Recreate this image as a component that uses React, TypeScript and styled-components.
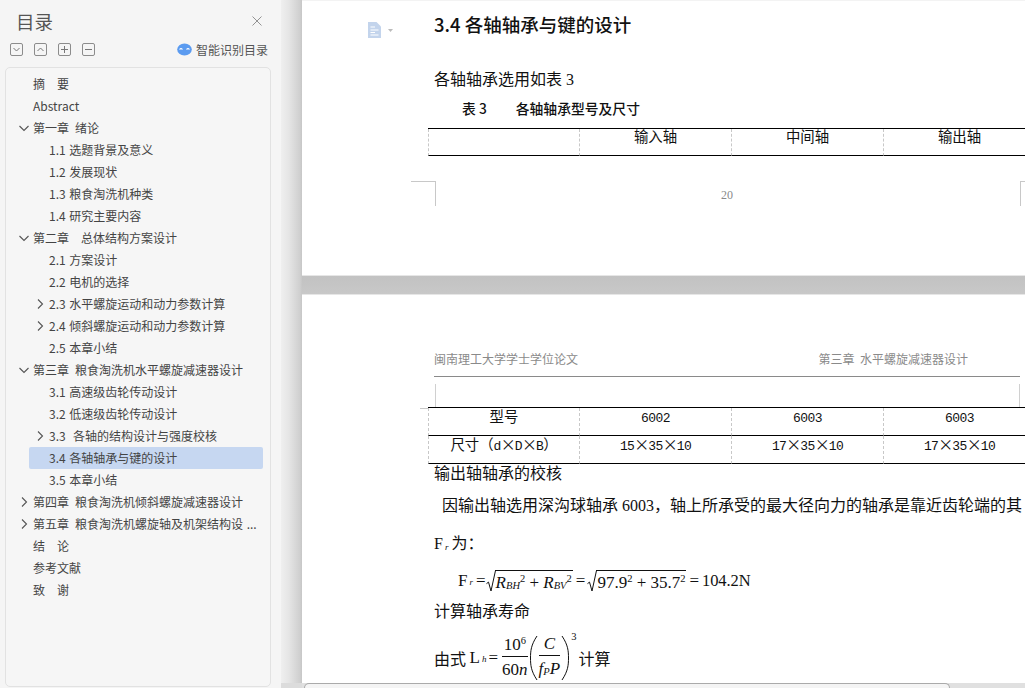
import React from "react";
import styled, { createGlobalStyle } from "styled-components";

const Global = createGlobalStyle`
  html, body { margin: 0; padding: 0; height: 100%; overflow: hidden; background: #fff; }
  #root { height: 688px; }
`;

const CJK = `"Noto Sans CJK SC", "Noto Sans", sans-serif`;
const SERIF = `"Liberation Serif", "Noto Sans CJK SC", serif`;

const Shell = styled.div`
  display: flex;
  width: 1025px;
  height: 688px;
  overflow: hidden;
  font-family: ${CJK};
`;

const Sidebar = styled.aside`
  flex: 0 0 281px;
  display: flex;
  flex-direction: column;
  background: #f5f5f5;
  padding: 0 10px 1px 5px;
  box-sizing: border-box;
`;

const TitleRow = styled.div`
  height: 40px;
  display: flex;
  align-items: center;
  justify-content: space-between;
  padding: 2px 9px 0 11px;
  box-sizing: border-box;
`;

const Title = styled.h1`
  margin: 0;
  font-size: 18.5px;
  font-weight: 400;
  color: #555;
`;

const CloseButton = styled.button`
  width: 10px;
  height: 10px;
  padding: 0;
  border: 0;
  background: none;
  display: flex;
`;

const ToolRow = styled.div`
  height: 27px;
  display: flex;
  align-items: center;
  padding: 0 3px 9px 5px;
  box-sizing: border-box;
  gap: 11px;
`;

const SquareButton = styled.button`
  width: 13px;
  height: 13px;
  padding: 0;
  border: 1px solid #8c8c8c;
  border-radius: 2px;
  background: #f5f5f5;
  box-sizing: border-box;
  display: flex;
`;

const Smart = styled.div`
  margin-left: auto;
  display: flex;
  align-items: center;
  gap: 4px;
  font-size: 12px;
  color: #555;
`;

const TreePanel = styled.nav`
  flex: 1;
  border: 1px solid #e2e2e2;
  border-radius: 5px;
  padding: 5px 7px 0 0;
  background: #f6f6f6;
`;

const TreeRow = styled.div<{ $level: number; $active?: boolean }>`
  position: relative;
  height: 22px;
  line-height: 22px;
  font-size: 12px;
  color: #444;
  white-space: pre;
  word-spacing: 1px;
  box-sizing: border-box;
  margin-left: ${(p) => (p.$level === 1 ? 27 : 23)}px;
  padding-left: ${(p) => (p.$level === 1 ? 0 : 20)}px;
  background: ${(p) => (p.$active ? "#c6d7f1" : "transparent")};
  border-radius: 2px;
`;

const Arrow = styled.svg<{ $level: number }>`
  position: absolute;
  left: ${(p) => (p.$level === 1 ? -14 : 6)}px;
  top: 6px;
  width: 10px;
  height: 10px;
`;

const Gutter = styled.div`
  flex: 0 0 21px;
  display: flex;
  flex-direction: column;
`;

const GutterFill = styled.div`
  flex: 1;
  background: linear-gradient(90deg, #efefef 0%, #e6e6e6 35%, #cfcfcf 90%, #c6c6c6 100%);
`;

const GutterFoot = styled.div`
  height: 5px;
  background: #dcdcdc;
`;

const Main = styled.main`
  flex: 1;
  min-width: 0;
  display: flex;
  flex-direction: column;
`;

const Pages = styled.div`
  position: relative;
  flex: 1;
  min-height: 0;
  overflow: hidden;
  background: #fff;
  border-top: 1px solid #f3f3f3;
`;

const PageOne = styled.section`
  position: relative;
  height: 274px;
  padding-left: 132px;
  box-sizing: border-box;
  color: #111;
`;

const Band = styled.div`
  height: 18px;
  background: linear-gradient(180deg, #c2c2c2 0%, #c8c8c8 100%);
  border-top: 1px solid #e6e6e6;
  border-bottom: 1px solid #e6e6e6;
`;

const PageTwo = styled.section`
  position: relative;
  padding-left: 132px;
  color: #111;
`;

const DocIcon = styled.div`
  position: absolute;
  left: 65px;
  top: 21px;
  display: flex;
  align-items: center;
  gap: 6px;
`;

const Heading = styled.h2`
  margin: 0;
  padding-top: 11px;
  height: 24px;
  line-height: 24px;
  font-size: 18.5px;
  font-weight: 500;
  color: #111;
`;

const Para = styled.p<{ $top: number; $indent?: number }>`
  margin: ${(p) => p.$top}px 0 0 ${(p) => p.$indent ?? 0}px;
  height: 24px;
  line-height: 24px;
  font-size: 16px;
  white-space: nowrap;
  font-family: ${SERIF};
`;

const CJKText = styled.span`
  font-family: ${CJK};
`;

const Caption = styled.div`
  margin: 8px 0 0 28px;
  height: 20px;
  line-height: 20px;
  font-size: 13.8px;
  font-weight: 500;
  white-space: pre;
  color: #111;
`;

const CaptionTitle = styled.span`
  margin-left: 29px;
`;

const DocTable = styled.div<{ $top: number }>`
  display: grid;
  grid-template-columns: 151px 152px 152px 152px;
  width: 607px;
  margin: ${(p) => p.$top}px 0 0 -6px;
  border-top: 1px solid #000;
  font-size: 14.4px;
  color: #111;
`;

const Cell = styled.div<{ $h: number; $pad: number }>`
  height: ${(p) => p.$h}px;
  line-height: 12px;
  padding-top: ${(p) => p.$pad}px;
  text-align: center;
  border-bottom: 1px solid #000;
  border-left: 1px dashed #c8c8c8;
  box-sizing: border-box;
  white-space: pre;
`;

const Mono = styled.span`
  font-family: "Liberation Mono", monospace;
  font-size: 13px;
  letter-spacing: -0.6px;
`;

const Cross = styled.span`
  display: inline-block;
  width: 14px;
  text-align: center;
  font-size: 15px;
  font-family: ${CJK};
`;

const CropTopLeft = styled.div`
  position: absolute;
  left: 109px;
  top: 180px;
  width: 24px;
  height: 24px;
  border-top: 1px solid #c8c8c8;
  border-right: 1px solid #c8c8c8;
`;

const CropTopRight = styled.div`
  position: absolute;
  left: 718px;
  top: 180px;
  width: 12px;
  height: 24px;
  border-top: 1px solid #c8c8c8;
  border-left: 1px solid #c8c8c8;
`;

const PageNumber = styled.div`
  position: absolute;
  left: 419px;
  top: 186px;
  font-size: 12px;
  line-height: 16px;
  font-family: ${SERIF};
  color: #8a8a8a;
`;

const RunHeader = styled.div`
  padding-top: 45px;
  width: 534px;
  height: 37px;
  display: flex;
  justify-content: space-between;
  align-items: center;
  font-size: 12px;
  color: #8a8a8a;
  white-space: pre;
  line-height: 18px;
`;

const HeaderRule = styled.div`
  margin-top: -1px;
  width: 586px;
  height: 1px;
  background: #8a8a8a;
`;

const HeaderGap = styled.div`
  margin: 7px 0 0 1px;
  width: 585px;
  height: 23px;
  border-left: 1px solid #d0d0d0;
  border-right: 1px solid #d0d0d0;
  box-sizing: border-box;
`;

const LeftTick = styled.div`
  position: absolute;
  left: 118px;
  top: 113px;
  width: 8px;
  height: 1px;
  background: #c8c8c8;
`;

const Formula = styled.div<{ $top: number; $indent: number }>`
  display: flex;
  align-items: center;
  margin: ${(p) => p.$top}px 0 0 ${(p) => p.$indent}px;
  font-family: ${SERIF};
  font-size: 17px;
  color: #111;
  white-space: pre;
`;

const Tiny = styled.i<{ $end: number }>`
  font-size: 9px;
  margin: 0 ${(p) => p.$end}px 0 2px;
  position: relative;
  top: 1px;
`;

const Eq = styled.span<{ $l: number; $r: number }>`
  margin: 0 ${(p) => p.$r}px 0 ${(p) => p.$l}px;
`;

const Radical = styled.span`
  display: inline-flex;
  align-items: center;
  height: 24px;
`;

const RadicalBody = styled.span`
  display: inline-block;
  border-top: 1px solid #111;
  height: 21px;
  line-height: 23px;
  margin-top: -1px;
  padding: 0 1px;
  font-style: italic;
`;

const Up = styled.sup`
  font-size: 10.5px;
  line-height: 0;
  font-style: normal;
  vertical-align: 6px;
`;

const Low = styled.span`
  font-size: 10.5px;
  font-style: italic;
  position: relative;
  top: 1px;
`;

const Plain = styled.span`
  font-style: normal;
`;

const Answer = styled.span`
  font-size: 16.5px;
  letter-spacing: -0.1px;
`;

const Frac = styled.span`
  display: inline-flex;
  flex-direction: column;
  align-items: center;
  line-height: 20px;
  margin: 0 1px;
`;

const FracTop = styled.span`
  padding: 0 1px 1px;
  border-bottom: 1px solid #111;
  align-self: stretch;
  text-align: center;
`;

const FracBottom = styled.span`
  padding-top: 3px;
  font-style: italic;
`;

const Cube = styled.span`
  align-self: flex-start;
  font-size: 10.5px;
  line-height: 12px;
  margin: -3px 2px 0 1px;
`;

const Lead = styled.span`
  font-family: ${CJK};
  font-size: 16px;
`;

const BottomTrack = styled.div`
  height: 5px;
  flex: 0 0 5px;
  display: flex;
  background: #e0e0e0;
  padding-left: 2px;
`;

const BottomTab = styled.div`
  width: 646px;
  background: #f4f4f4;
  border: 1px solid #aaa;
  border-bottom: 0;
  border-radius: 6px 6px 0 0;
  box-sizing: border-box;
`;

type Item = { t: string; level: 1 | 2; arrow?: "down" | "right"; active?: boolean };
const items: Item[] = [
  { t: "摘\u3000要", level: 1 },
  { t: "Abstract", level: 1 },
  { t: "第一章\u2002绪论", level: 1, arrow: "down" },
  { t: "1.1 选题背景及意义", level: 2 },
  { t: "1.2 发展现状", level: 2 },
  { t: "1.3 粮食淘洗机种类", level: 2 },
  { t: "1.4 研究主要内容", level: 2 },
  { t: "第二章\u3000总体结构方案设计", level: 1, arrow: "down" },
  { t: "2.1 方案设计", level: 2 },
  { t: "2.2 电机的选择", level: 2 },
  { t: "2.3 水平螺旋运动和动力参数计算", level: 2, arrow: "right" },
  { t: "2.4 倾斜螺旋运动和动力参数计算", level: 2, arrow: "right" },
  { t: "2.5 本章小结", level: 2 },
  { t: "第三章\u2002粮食淘洗机水平螺旋减速器设计", level: 1, arrow: "down" },
  { t: "3.1 高速级齿轮传动设计", level: 2 },
  { t: "3.2 低速级齿轮传动设计", level: 2 },
  { t: "3.3  各轴的结构设计与强度校核", level: 2, arrow: "right" },
  { t: "3.4 各轴轴承与键的设计", level: 2, active: true },
  { t: "3.5 本章小结", level: 2 },
  { t: "第四章\u2002粮食淘洗机倾斜螺旋减速器设计", level: 1, arrow: "right" },
  { t: "第五章\u2002粮食淘洗机螺旋轴及机架结构设 ...", level: 1, arrow: "right" },
  { t: "结\u3000论", level: 1 },
  { t: "参考文献", level: 1 },
  { t: "致\u3000谢", level: 1 },
];

const Glyph = ({ d }: { d: string }) => (
  <svg width="11" height="11" viewBox="0 0 11 11" fill="none" stroke="#777" strokeWidth="1">
    <path d={d} />
  </svg>
);

const RootSvg = styled.svg`
  margin-right: -1px;
`;

const Root = ({ h }: { h: number }) => (
  <RootSvg width="10" height={h} viewBox={`0 0 10 ${h}`} fill="none" stroke="#111" strokeWidth="1">
    <path d={`M0.5 ${h * 0.62} L2.5 ${h * 0.55} L5 ${h - 1} L9.5 0.5`} />
  </RootSvg>
);

const ParenSvg = styled.svg<{ $flip?: boolean }>`
  transform: ${(p) => (p.$flip ? "scaleX(-1)" : "none")};
`;

const Paren = ({ flip }: { flip?: boolean }) => (
  <ParenSvg $flip={flip} width="9" height="46" viewBox="0 0 9 46" fill="none" stroke="#111" strokeWidth="1">
    <path d="M8 1 C2 10 1.5 16 1.5 23 C1.5 30 2 36 8 45" />
  </ParenSvg>
);

const X = () => <Cross>×</Cross>;

export default function App() {
  return (
    <Shell>
      <Global />
      <Sidebar>
        <TitleRow>
          <Title>目录</Title>
          <CloseButton aria-label="关闭">
            <svg width="10" height="10" viewBox="0 0 10 10" stroke="#888" strokeWidth="0.9">
              <path d="M0.5 0.5 L9.5 9.5 M9.5 0.5 L0.5 9.5" />
            </svg>
          </CloseButton>
        </TitleRow>
        <ToolRow>
          <SquareButton><Glyph d="M2.5 4 L5.5 7 L8.5 4" /></SquareButton>
          <SquareButton><Glyph d="M2.5 7 L5.5 4 L8.5 7" /></SquareButton>
          <SquareButton><Glyph d="M2 5.5 H9 M5.5 2 V9" /></SquareButton>
          <SquareButton><Glyph d="M2 5.5 H9" /></SquareButton>
          <Smart>
            <svg width="15" height="13" viewBox="0 0 15 13">
              <ellipse cx="7.5" cy="6.5" rx="7.3" ry="6" fill="#5b9bf0" />
              <path d="M2.5 6.5 Q4 4.8 5.5 6.5 M9.5 6.5 Q11 4.8 12.5 6.5" stroke="#fff" strokeWidth="1.1" fill="none" />
            </svg>
            <span>智能识别目录</span>
          </Smart>
        </ToolRow>
        <TreePanel>
          {items.map((it) => (
            <TreeRow key={it.t} $level={it.level} $active={it.active}>
              {it.arrow && (
                <Arrow $level={it.level} viewBox="0 0 10 10" fill="none" stroke="#555" strokeWidth="1.1">
                  <path d={it.arrow === "down" ? "M0.5 3 L5 7.5 L9.5 3" : "M3 0.5 L7.5 5 L3 9.5"} />
                </Arrow>
              )}
              {it.t}
            </TreeRow>
          ))}
        </TreePanel>
      </Sidebar>
      <Gutter>
        <GutterFill />
        <GutterFoot />
      </Gutter>
      <Main>
        <Pages>
          <DocIcon>
            <svg width="15" height="16" viewBox="0 0 15 16">
              <path d="M1 0 H9.5 L14 4.5 V16 H1 Z" fill="#c3d4ec" />
              <path d="M3.5 5 H8 M3.5 8 H11.5 M3.5 10.5 H8 M3.5 13 H11.5" stroke="#fff" strokeWidth="1.2" />
            </svg>
            <svg width="5" height="3" viewBox="0 0 5 3"><path d="M0 0 H5 L2.5 3 Z" fill="#bbb" /></svg>
          </DocIcon>
          <PageOne>
            <Heading>3.4 各轴轴承与键的设计</Heading>
            <Para $top={30}><CJKText>各轴轴承选用如表</CJKText> 3</Para>
            <Caption>表 3<CaptionTitle>各轴轴承型号及尺寸</CaptionTitle></Caption>
            <DocTable $top={10}>
              <Cell $h={27} $pad={1} />
              <Cell $h={27} $pad={1}>输入轴</Cell>
              <Cell $h={27} $pad={1}>中间轴</Cell>
              <Cell $h={27} $pad={1}>输出轴</Cell>
            </DocTable>
            <CropTopLeft />
            <CropTopRight />
            <PageNumber>20</PageNumber>
          </PageOne>
          <Band />
          <PageTwo>
            <LeftTick />
            <RunHeader>
              <span>闽南理工大学学士学位论文</span>
              <span>第三章  水平螺旋减速器设计</span>
            </RunHeader>
            <HeaderRule />
            <HeaderGap />
            <DocTable $top={0}>
              <Cell $h={28} $pad={2}>型号</Cell>
              <Cell $h={28} $pad={2}><Mono>6002</Mono></Cell>
              <Cell $h={28} $pad={2}><Mono>6003</Mono></Cell>
              <Cell $h={28} $pad={2}><Mono>6003</Mono></Cell>
              <Cell $h={28} $pad={2}>尺寸（<Mono>d</Mono><X /><Mono>D</Mono><X /><Mono>B</Mono>）</Cell>
              <Cell $h={28} $pad={2}><Mono>15</Mono><X /><Mono>35</Mono><X /><Mono>10</Mono></Cell>
              <Cell $h={28} $pad={2}><Mono>17</Mono><X /><Mono>35</Mono><X /><Mono>10</Mono></Cell>
              <Cell $h={28} $pad={2}><Mono>17</Mono><X /><Mono>35</Mono><X /><Mono>10</Mono></Cell>
            </DocTable>
            <Para $top={-4}><CJKText>输出轴轴承的校核</CJKText></Para>
            <Para $top={8} $indent={8}>
              <CJKText>因输出轴选用深沟球轴承</CJKText> 6003<CJKText>，轴上所承受的最大径向力的轴承是靠近齿轮端的其</CJKText>
            </Para>
            <Para $top={14}>F<Tiny $end={3}>r</Tiny><CJKText>为：</CJKText></Para>
            <Formula $top={15} $indent={24}>
              F<Tiny $end={3}>r</Tiny>=
              <Radical>
                <Root h={22} />
                <RadicalBody>R<Low>BH</Low><Up>2</Up><Plain> + </Plain>R<Low>BV</Low><Up>2</Up></RadicalBody>
              </Radical>
              <Eq $l={3} $r={2}>=</Eq>
              <Radical>
                <Root h={22} />
                <RadicalBody><Plain>97.9<Up>2</Up> + 35.7<Up>2</Up></Plain></RadicalBody>
              </Radical>
              <Eq $l={3} $r={3}>=</Eq>
              <Answer>104.2N</Answer>
            </Formula>
            <Para $top={5}><CJKText>计算轴承寿命</CJKText></Para>
            <Formula $top={12} $indent={0}>
              <Lead>由式 </Lead>L<Tiny $end={2}>h</Tiny><Eq $l={0} $r={3}>=</Eq>
              <Frac>
                <FracTop>10<Up>6</Up></FracTop>
                <FracBottom><Plain>60</Plain>n</FracBottom>
              </Frac>
              <Paren />
              <Frac>
                <FracTop><i>C</i></FracTop>
                <FracBottom>f<Low>P</Low>P</FracBottom>
              </Frac>
              <Paren flip />
              <Cube>3</Cube>
              <Lead>计算</Lead>
            </Formula>
          </PageTwo>
        </Pages>
        <BottomTrack>
          <BottomTab />
        </BottomTrack>
      </Main>
    </Shell>
  );
}
